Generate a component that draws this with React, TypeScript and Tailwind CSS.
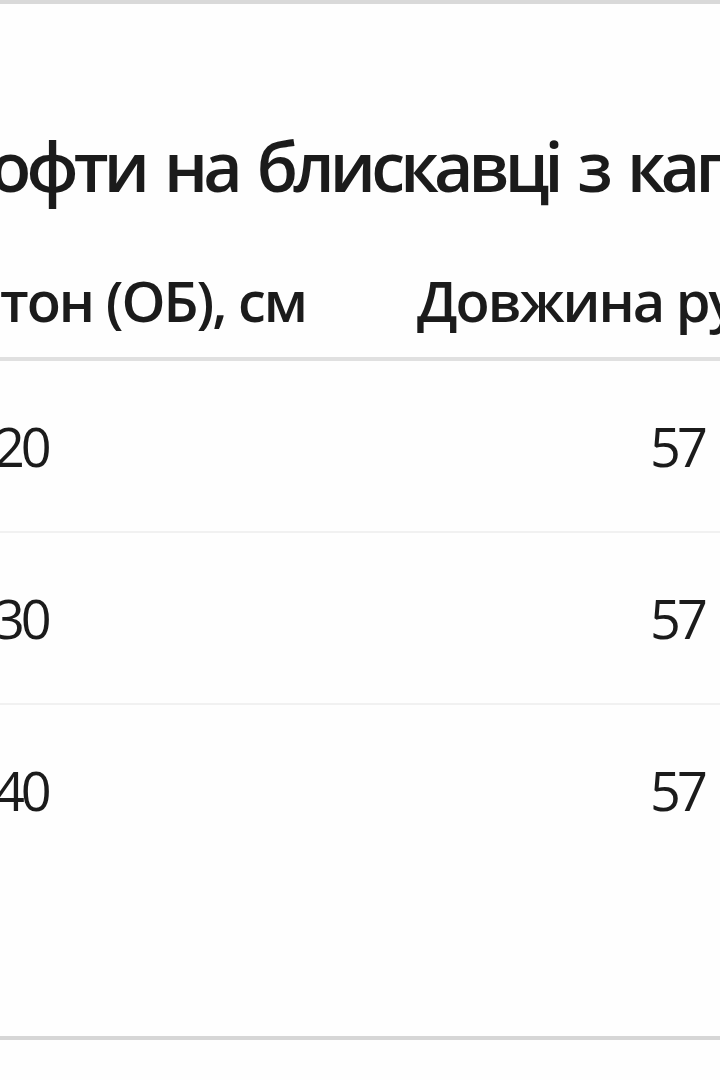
const rows = ['120', '130', '140'];

export default function App() {
  return (
    <div className="h-[1080px] w-[720px] overflow-hidden bg-[#fefefe] font-['Open_Sans',sans-serif] text-[#1b1b1b]">
      <div className="h-[4px] bg-[#d9d9d9]" />

      <div className="h-[196px] pt-[128px]">
        <h1 className="-ml-[44px] whitespace-nowrap text-[68px] font-semibold leading-none tracking-[-4.8px] [word-spacing:6px]">
          кофти на блискавці з капюшоном
        </h1>
      </div>

      <div className="flex h-[157px] items-start whitespace-nowrap pt-[72px] text-[56px] font-semibold leading-none tracking-[-2px]">
        <div className="w-[417px] shrink-0">тон (ОБ), см</div>
        <div>Довжина рукава, см</div>
      </div>
      <div className="h-[4px] bg-[#e0e0e0]" />

      {rows.map((value, i) => (
        <div
          key={value}
          className={
            i < rows.length - 1
              ? 'flex h-[172px] items-center border-b-2 border-[#f1f1f1] text-[54px] leading-none tracking-[-4px]'
              : 'flex h-[170px] items-center text-[54px] leading-none tracking-[-4px]'
          }
        >
          <div className="-ml-[33px] w-[683px] shrink-0">{value}</div>
          <div>57</div>
        </div>
      ))}

      <div className="h-[161px]" />
      <div className="h-[4px] bg-[#d6d6d6]" />
    </div>
  );
}
